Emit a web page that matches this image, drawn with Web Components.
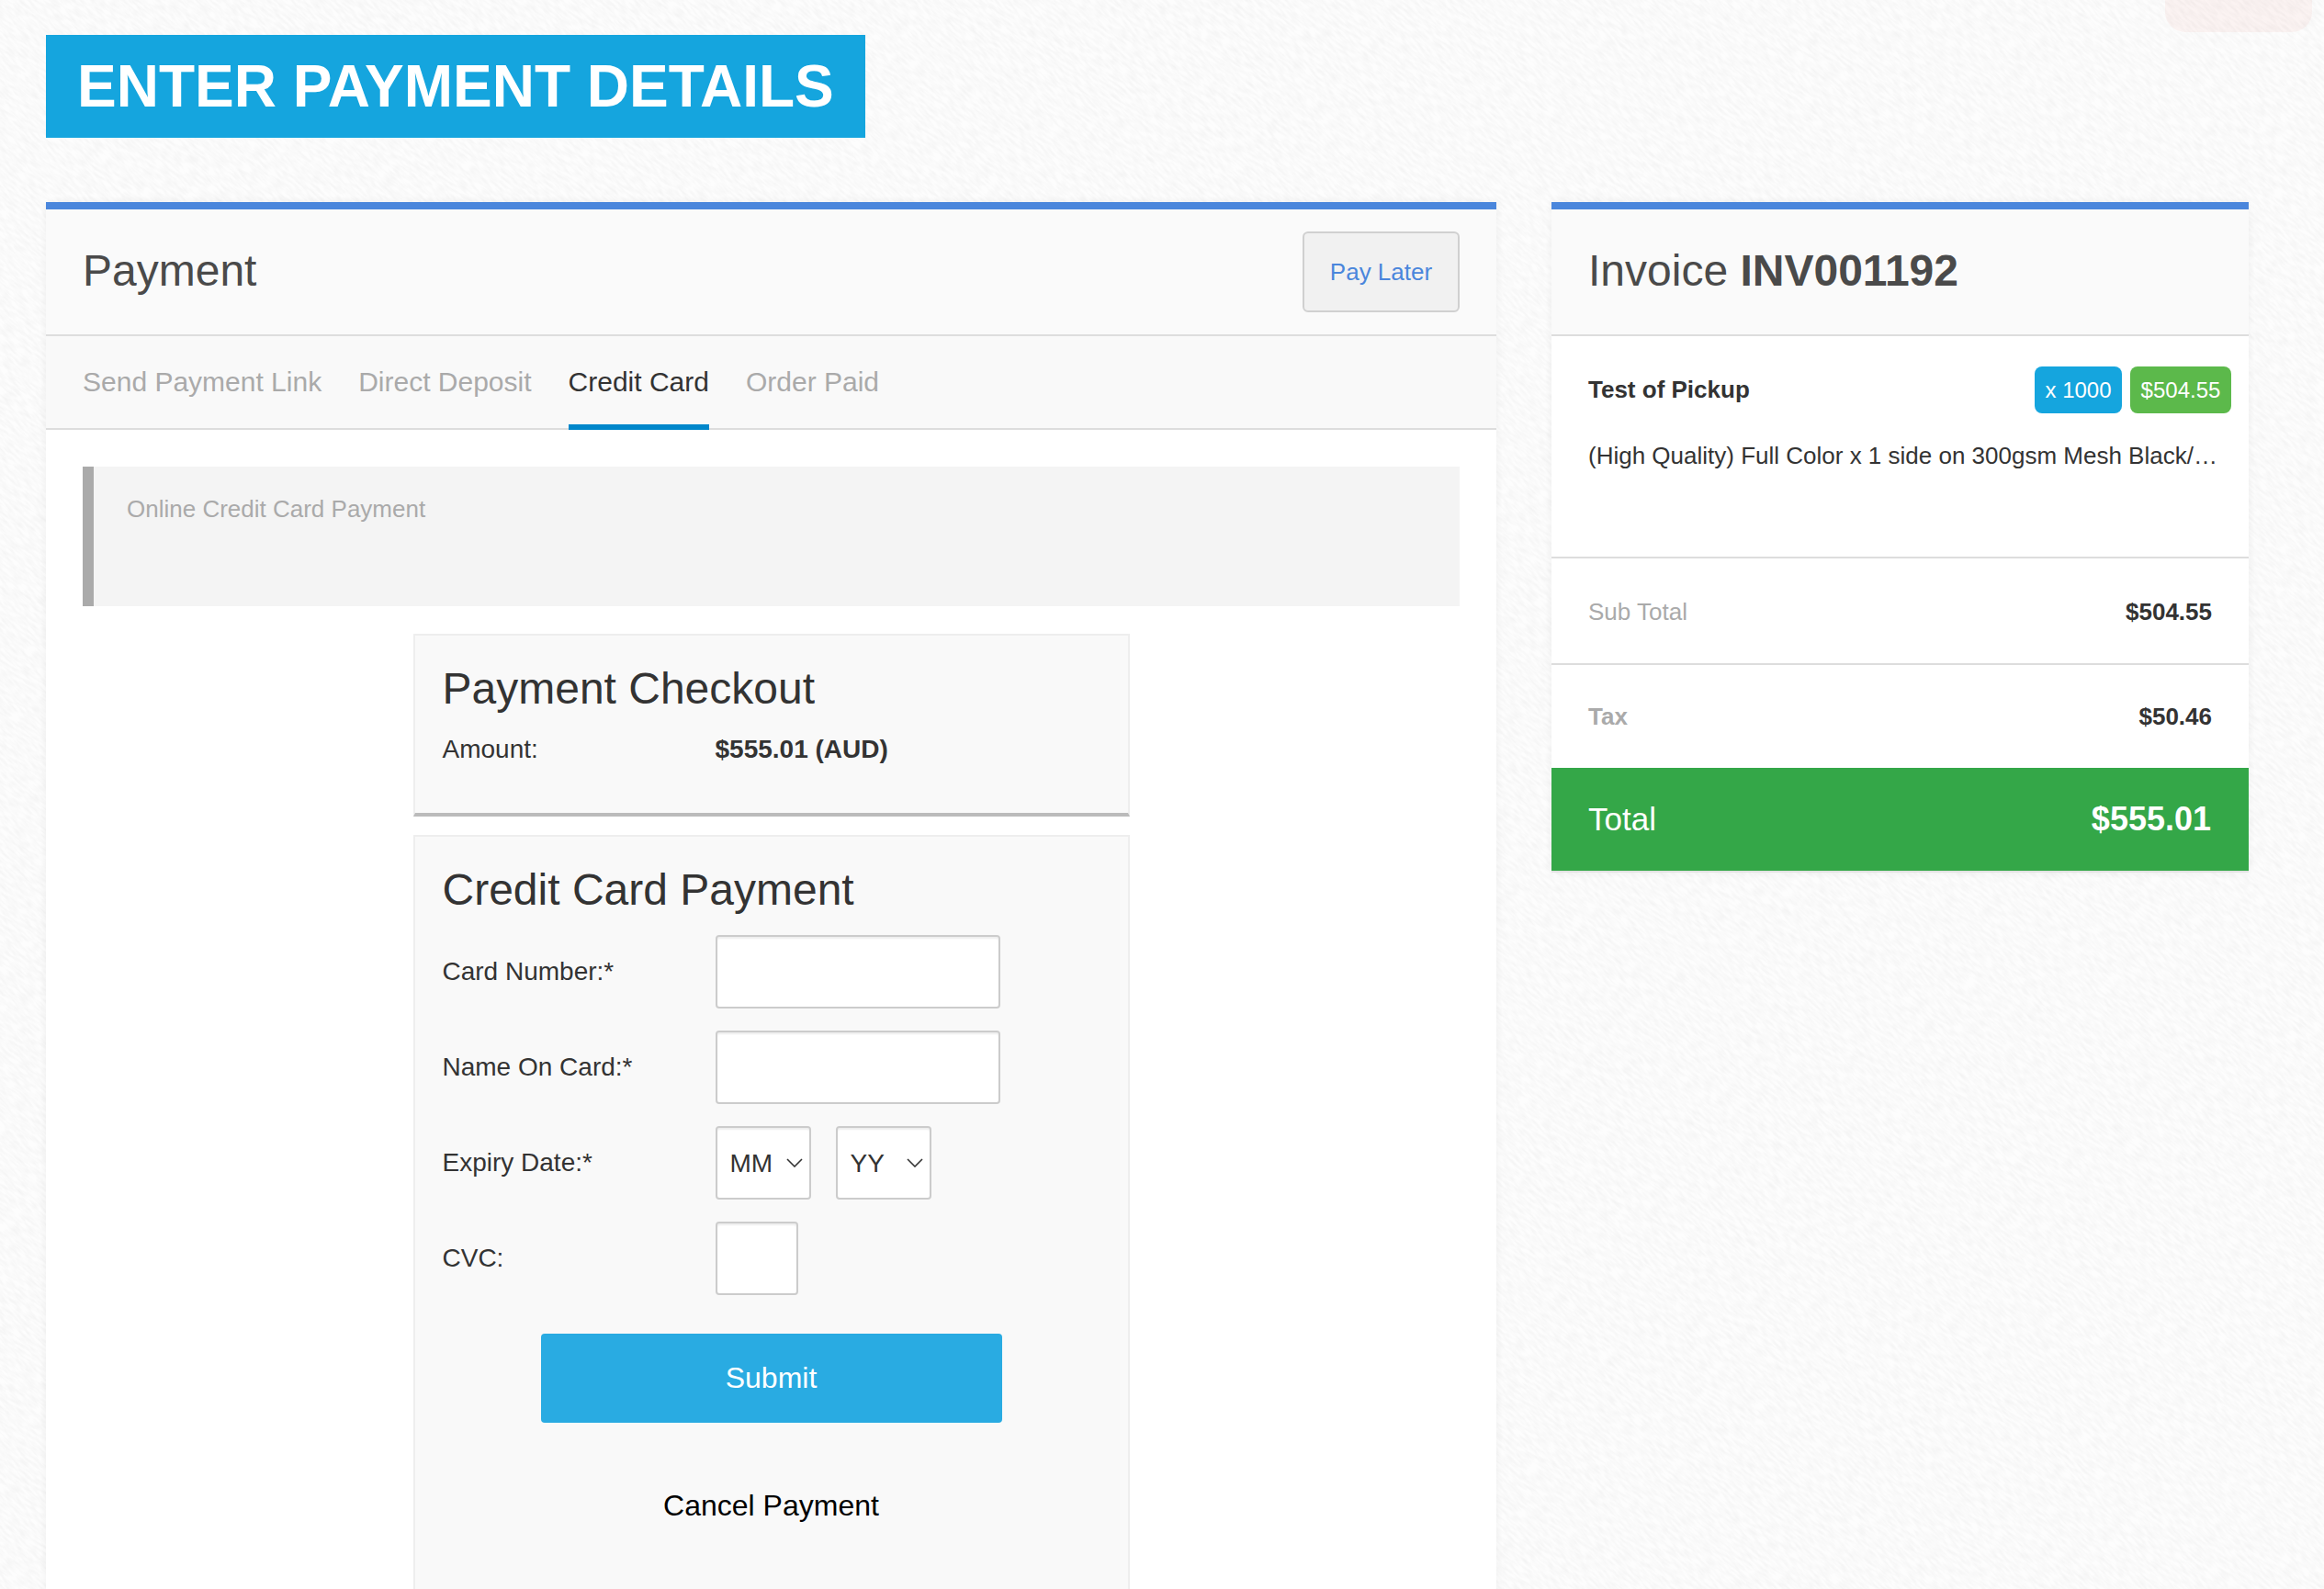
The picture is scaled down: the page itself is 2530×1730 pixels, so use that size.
<!DOCTYPE html>
<html lang="en">
<head>
<meta charset="utf-8">
<title>Enter Payment Details</title>
<style>
  html, body { margin: 0; padding: 0; }
  body { font-family: "Liberation Sans", Arial, sans-serif; color: #333; }
</style>
</head>
<body>

<pay-page>
  <page-heading>ENTER PAYMENT DETAILS</page-heading>

  <pay-panel slot="main">
    <span slot="title">Payment</span>
    <pay-button slot="action">Pay Later</pay-button>
    <pay-tabs slot="tabs" active="Credit Card" items="Send Payment Link|Direct Deposit|Credit Card|Order Paid"></pay-tabs>
    <pay-notice>Online Credit Card Payment</pay-notice>
    <checkout-box heading="Payment Checkout" kind="summary">
      <form-row label="Amount:" tight><b>$555.01 (AUD)</b></form-row>
    </checkout-box>
    <checkout-box heading="Credit Card Payment">
      <form-row label="Card Number:*"><text-field width="310"></text-field></form-row>
      <form-row label="Name On Card:*"><text-field width="310"></text-field></form-row>
      <form-row label="Expiry Date:*">
        <select-field placeholder="MM"></select-field>
        <select-field placeholder="YY"></select-field>
      </form-row>
      <form-row label="CVC:"><text-field width="90"></text-field></form-row>
      <form-actions></form-actions>
    </checkout-box>
  </pay-panel>

  <pay-panel slot="side">
    <span slot="title">Invoice <b>INV001192</b></span>
    <invoice-item name="Test of Pickup" qty="x 1000" price="$504.55">(High Quality) Full Color x 1 side on 300gsm Mesh Black/…</invoice-item>
    <invoice-row label="Sub Total" value="$504.55"></invoice-row>
    <invoice-row label="Tax" value="$50.46" strong></invoice-row>
    <invoice-total label="Total" value="$555.01"></invoice-total>
  </pay-panel>
</pay-page>

<script>
// Small helper, every element here just stamps a static shadow root
function define(name, html, Base = HTMLElement) {
  customElements.define(name, class extends Base {
    constructor() {
      super()
      this.attachShadow({ mode: 'open' }).innerHTML = typeof html === 'function' ? html(this) : html
    }
    connectedCallback() {
      if (typeof html === 'function') this.shadowRoot.innerHTML = html(this)
    }
  })
}

const attr = (el, name) => el.getAttribute(name) || ''

// ─── Page shell ──────────────────────────────────────────────────────────

const paper = `<svg xmlns='http://www.w3.org/2000/svg' width='2530' height='1730'><filter id='n' x='0' y='0' width='100%' height='100%'><feTurbulence type='fractalNoise' baseFrequency='.36 .08' numOctaves='2' seed='7'/><feColorMatrix values='0 0 0 0 .88 0 0 0 0 .88 0 0 0 0 .88 1.5 0 0 0 -.5'/></filter><g transform='rotate(-48 1265 865)'><rect x='-400' y='-900' width='3400' height='3500' filter='url(%23n)'/></g></svg>`

define('pay-page', `
  <style>
    :host {
      display: block;
      position: relative;
      box-sizing: border-box;
      height: 1730px;
      padding: 38px 82px 0 50px;
      overflow: hidden;
      background: #fdfdfd url("data:image/svg+xml,${paper}") 0 0 no-repeat;
    }
    .columns {
      display: grid;
      grid-template-columns: 1579px 759px;
      column-gap: 60px;
      align-items: start;
      margin-top: 70px;
    }
    /* faded notification tab stuck to the top edge */
    .ghost {
      position: absolute;
      top: 0;
      right: 13px;
      width: 160px;
      height: 35px;
      border-radius: 0 0 22px 22px;
      background: rgba(225, 120, 105, .07);
    }
  </style>
  <div class="ghost"></div>
  <slot></slot>
  <div class="columns">
    <slot name="main"></slot>
    <slot name="side"></slot>
  </div>
`)

define('page-heading', `
  <style>
    :host {
      display: block;
      box-sizing: border-box;
      width: 892px;
      height: 112px;
      padding-left: 34px;
      background: #15a5de;
      color: #fff;
      font: bold 64px/112px "Liberation Sans", Arial, sans-serif;
      white-space: nowrap;
    }
  </style>
  <slot></slot>
`)

// ─── Panels ──────────────────────────────────────────────────────────────

define('pay-panel', `
  <style>
    :host {
      display: block;
      border-top: 8px solid #4a86dc;
      background: #fff;
      box-shadow: 0 0 8px rgba(0, 0, 0, .06);
    }
    header {
      display: flex;
      align-items: center;
      justify-content: space-between;
      box-sizing: border-box;
      height: 138px;
      padding: 0 40px;
      background: #fafafa;
      border-bottom: 2px solid #ddd;
      color: #4a4a4a;
      font-size: 48px;
    }
    .title { padding-bottom: 3px; }
    .body ::slotted(pay-notice), .body ::slotted(checkout-box) { margin-left: 40px; margin-right: 40px; }
  </style>
  <header>
    <span class="title"><slot name="title"></slot></span>
    <slot name="action"></slot>
  </header>
  <slot name="tabs"></slot>
  <div class="body"><slot></slot></div>
`)

define('pay-button', `
  <style>
    :host {
      display: flex;
      align-items: center;
      justify-content: center;
      box-sizing: border-box;
      width: 171px;
      height: 88px;
      background: #f1f1f1;
      border: 2px solid #d0d0d0;
      border-radius: 6px;
      color: #4a86dc;
      font-size: 26px;
    }
  </style>
  <slot></slot>
`)

define('pay-tabs', el => `
  <style>
    :host {
      display: flex;
      gap: 40px;
      box-sizing: border-box;
      height: 102px;
      padding: 0 40px;
      background: #f9f9f9;
      border-bottom: 2px solid #ddd;
      font-size: 30px;
    }
    a {
      box-sizing: border-box;
      height: 102px;
      line-height: 100px;
      color: #aaa;
      white-space: nowrap;
    }
    a.on { color: #333; border-bottom: 6px solid #0087cb; }
  </style>
  ${attr(el, 'items').split('|').map(t => `<a class="${t === attr(el, 'active') ? 'on' : ''}">${t}</a>`).join('')}
`)

define('pay-notice', `
  <style>
    :host {
      display: block;
      box-sizing: border-box;
      height: 152px;
      margin-top: 40px;
      padding: 31px 36px;
      background: #f4f4f4;
      border-left: 12px solid #aaa;
      color: #aaa;
      font-size: 26px;
      line-height: 30px;
    }
  </style>
  <slot></slot>
`)

// ─── Checkout form ───────────────────────────────────────────────────────

define('checkout-box', el => `
  <style>
    :host {
      display: block;
      box-sizing: border-box;
      width: 780px;
      margin: 20px auto 0 !important;
      padding: 30px 30px 100px;
      background: #f9f9f9;
      border: 2px solid #eee;
      color: #333;
    }
    :host([kind="summary"]) {
      height: 199px;
      margin-top: 30px !important;
      padding-bottom: 0;
      border-bottom: 4px solid #bbb;
    }
    h2 { margin: 0 0 21px; font: normal 48px/56px "Liberation Sans", Arial, sans-serif; }
    .rows { display: flex; flex-direction: column; gap: 24px; }
    :host([kind="summary"]) h2 { margin-bottom: 18px; }
  </style>
  <h2>${attr(el, 'heading')}</h2>
  <div class="rows"><slot></slot></div>
`)

define('form-row', el => `
  <style>
    :host {
      display: grid;
      grid-template-columns: 297px auto;
      align-items: center;
      font-size: 28px;
      line-height: 40px;
    }
    .field { display: flex; gap: 27px; }
  </style>
  <span>${attr(el, 'label')}</span>
  <div class="field"><slot></slot></div>
`)

define('text-field', el => `
  <style>
    :host { display: block; }
    input {
      display: block;
      box-sizing: border-box;
      width: ${attr(el, 'width')}px;
      height: 80px;
      background: #fff;
      border: 2px solid #ccc;
      border-radius: 4px;
      box-shadow: inset 0 2px 2px rgba(0, 0, 0, .07);
      outline: none;
    }
  </style>
  <input type="text">
`)

const chevron = `<svg xmlns='http://www.w3.org/2000/svg' width='18' height='10'><path d='M1 1l8 8 8-8' fill='none' stroke='%23333' stroke-width='1.6'/></svg>`

define('select-field', el => `
  <style>
    :host { display: block; }
    select {
      display: block;
      appearance: none;
      box-sizing: border-box;
      width: 104px;
      height: 80px;
      padding: 0 0 0 14px;
      background: #fff url("data:image/svg+xml,${chevron}") right 7px center no-repeat;
      border: 2px solid #ccc;
      border-radius: 4px;
      box-shadow: inset 0 2px 2px rgba(0, 0, 0, .07);
      color: #333;
      font: 28px "Liberation Sans", Arial, sans-serif;
      outline: none;
    }
  </style>
  <select><option>${attr(el, 'placeholder')}</option></select>
`)

define('form-actions', `
  <style>
    :host {
      display: flex;
      flex-direction: column;
      align-items: center;
      margin-top: 18px;
      font-size: 32px;
    }
    button {
      width: 502px;
      height: 97px;
      background: #29abe2;
      border: 0;
      border-radius: 4px;
      color: #fff;
      font: 32px "Liberation Sans", Arial, sans-serif;
    }
    a { margin-top: 70px; color: #000; line-height: 40px; }
  </style>
  <button type="button">Submit</button>
  <a>Cancel Payment</a>
`)

// ─── Invoice side ────────────────────────────────────────────────────────

define('invoice-item', el => `
  <style>
    :host {
      display: block;
      box-sizing: border-box;
      height: 242px;
      padding: 33px 19px 0 40px;
      border-bottom: 2px solid #ddd;
      color: #333;
      font-size: 26px;
    }
    .top { display: flex; align-items: center; height: 51px; }
    b { flex: 1; }
    .tag {
      flex: none;
      height: 51px;
      margin-left: 9px;
      border-radius: 8px;
      color: #fff;
      font-size: 24px;
      line-height: 51px;
      text-align: center;
    }
    p { margin: 26px 0 0; line-height: 40px; white-space: nowrap; }
  </style>
  <div class="top">
    <b>${attr(el, 'name')}</b>
    <span class="tag" style="width:95px;background:#15a5de">${attr(el, 'qty')}</span>
    <span class="tag" style="width:110px;background:#5cb94b">${attr(el, 'price')}</span>
  </div>
  <p><slot></slot></p>
`)

define('invoice-row', el => `
  <style>
    :host {
      display: flex;
      align-items: center;
      justify-content: space-between;
      box-sizing: border-box;
      height: 116px;
      padding: 2px 40px 0;
      border-bottom: 2px solid #ddd;
      color: #aaa;
      font-size: 26px;
    }
    :host(:last-of-type) { border-bottom: 0; height: 112px; padding-top: 0; }
    :host([strong]) span { font-weight: bold; }
    b { color: #333; }
  </style>
  <span>${attr(el, 'label')}</span>
  <b>${attr(el, 'value')}</b>
`)

define('invoice-total', el => `
  <style>
    :host {
      display: flex;
      align-items: center;
      justify-content: space-between;
      box-sizing: border-box;
      height: 114px;
      padding: 0 41px 0 40px;
      background: #34a748;
      border-bottom: 2px solid #e3e3e3;
      color: #fff;
      font-size: 35px;
    }
    b { font-size: 36px; }
  </style>
  <span>${attr(el, 'label')}</span>
  <b>${attr(el, 'value')}</b>
`)
</script>
</body>
</html>
